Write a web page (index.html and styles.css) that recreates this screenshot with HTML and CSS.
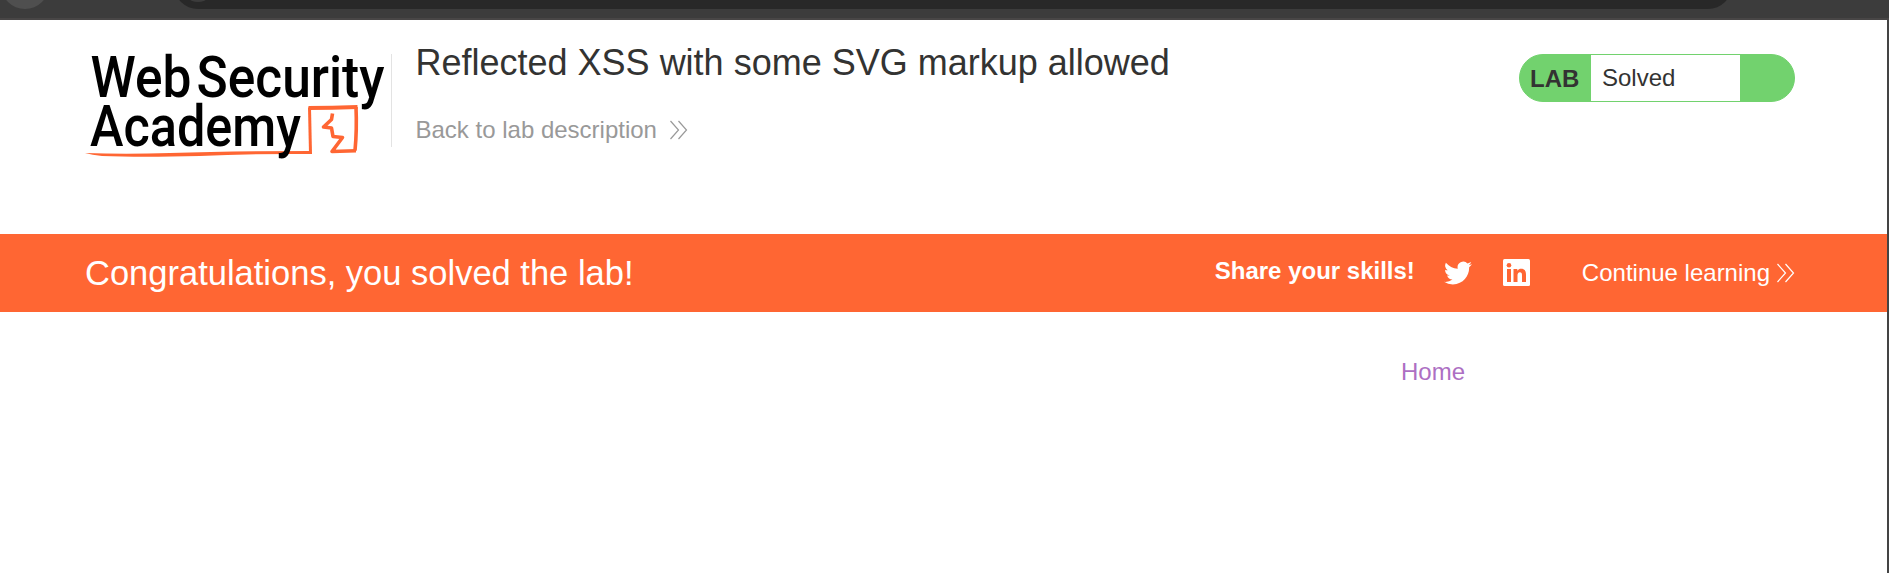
FILE: index.html
```html
<!DOCTYPE html>
<html lang="en">
<head>
<meta charset="utf-8">
<title>Reflected XSS with some SVG markup allowed</title>
<link rel="stylesheet" href="styles.css">
</head>
<body>
<svg class="chrome" viewBox="0 0 1889 20">
  <rect width="1889" height="20" fill="#3c3c3c"/>
  <circle cx="25" cy="-15" r="24" fill="#4f4f4f"/>
  <rect x="174" y="-39" width="1558" height="48" rx="24" fill="#282828"/>
  <circle cx="198" cy="-15" r="17" fill="#3c3c3c"/>
  <rect y="18" width="1889" height="2" fill="#484646"/>
</svg>
<div class="page">
  <header class="header">
    <svg class="logo" viewBox="0 0 310 130">
      <g fill="none" stroke="#ff6633" stroke-linejoin="round">
        <path d="M240.500 114L239.500 67.500" stroke-width="3"/>
        <path d="M238.500 68Q262 67.800 287.500 67" stroke-width="4"/>
        <path d="M286 67Q287 90 285 110.700" stroke-width="3.600"/>
        <path d="M286 110.700L262 111.500L272.500 97.500L263 96.500L261.500 88L253.500 87L261.500 79.500L262.500 73.500" stroke-width="3.600"/>
      </g>
      <path d="M15 113Q55 114.500 100 113Q160 111 241 111V114Q180 113.500 130 116Q70 117.500 32 116Q22 115 15 113Z" fill="#ff6633"/>
      <g class="wordmark">
        <text x="20.500" y="57" textLength="101" lengthAdjust="spacingAndGlyphs">Web</text>
        <text x="126.500" y="57" textLength="188" lengthAdjust="spacingAndGlyphs">Security</text>
        <text x="20" y="106" textLength="211" lengthAdjust="spacingAndGlyphs">Academy</text>
      </g>
    </svg>
    <div class="heading">
      <h2>Reflected XSS with some SVG markup allowed</h2>
      <a class="back">Back to lab description
        <svg class="arrows" viewBox="0 0 18 20"><path d="M.5 1L8.500 10L.5 19M8.500 1L16.500 10L8.500 19"/></svg>
      </a>
    </div>
    <div class="status"><b>LAB</b><span>Solved</span></div>
  </header>
  <section class="banner">
    <h4>Congratulations, you solved the lab!</h4>
    <div class="share">
      <b>Share your skills!</b>
      <svg class="twitter" viewBox="0 0 24 24"><path d="M23.950 4.570a10 10 0 0 1-2.820.77 4.960 4.960 0 0 0 2.160-2.720c-.95.560-2 .960-3.130 1.180a4.920 4.920 0 0 0-8.380 4.480C7.690 8.090 4.070 6.130 1.640 3.160a4.930 4.930 0 0 0 1.520 6.570 4.900 4.900 0 0 1-2.230-.61v.06a4.920 4.920 0 0 0 3.950 4.830 5 5 0 0 1-2.220.08 4.930 4.930 0 0 0 4.600 3.420A9.870 9.870 0 0 1 0 19.540a13.990 13.990 0 0 0 7.550 2.210c9.050 0 14-7.500 14-13.990v-.64a9.900 9.900 0 0 0 2.400-2.550z"/></svg>
      <svg class="linkedin" viewBox="0 0 27 27"><rect width="27" height="27" rx="1.500"/><path fill="#ff6633" d="M4 10h4v13H4zM10.500 10h3.800v1.800c1-1.500 2.200-2.100 3.900-2.100 3.500 0 4.800 2.300 4.800 6V23h-4v-6.600c0-2-.5-3.200-2.100-3.200-1.700 0-2.400 1.300-2.400 3.200V23h-4z"/><circle cx="6" cy="6.200" r="2.300" fill="#ff6633"/></svg>
      <a class="continue">Continue learning
        <svg class="arrows" viewBox="0 0 18 20"><path d="M.5 1L8.500 10L.5 19M8.500 1L16.500 10L8.500 19"/></svg>
      </a>
    </div>
  </section>
  <nav class="nav"><a>Home</a></nav>
</div>
</body>
</html>
```

FILE: styles.css
```css
* { box-sizing: border-box; }
body { margin: 0; background: #fff; color: #333332; font: 24px/28px "Liberation Sans", Arial, sans-serif; overflow: hidden; }
.chrome { display: block; width: 1889px; height: 20px; }
.page { height: 553px; border-right: 2px solid #444; }
.header { display: flex; align-items: flex-start; height: 214px; padding: 20px 92px 0 70px; }
.logo { width: 310px; height: 130px; flex: none; overflow: visible; }
.wordmark { font-family: Roboto, sans-serif; font-weight: 500; font-size: 57px; fill: #000; }
.heading { margin: 14px 0 0 11px; height: 93px; padding-left: 23.5px; border-left: 1px solid #e3e3e3; white-space: nowrap; }
h2 { margin: -13px 0 0; font-weight: 400; font-size: 36px; line-height: 44px; }
.back { display: flex; align-items: center; gap: 13px; margin-top: 31px; color: #999; }
.arrows { width: 18px; height: 20px; fill: none; stroke: currentColor; stroke-width: 1.2; }
.status { display: flex; width: 276px; height: 48px; margin: 14px 0 0 auto; border: 1px solid #72d26e; border-radius: 24px; background: #72d26e; line-height: 46px; }
.status b { width: 71px; padding-left: 10px; line-height: 48px; }
.status span { width: 149px; padding-left: 11px; background: #fff; }
.banner { display: flex; align-items: center; justify-content: space-between; height: 78px; padding: 0 92px 0 85px; background: #ff6633; color: #fff; white-space: nowrap; }
h4 { margin: 0; font-weight: 400; font-size: 34.5px; line-height: 44px; }
.share { display: flex; align-items: center; }
.share > b { margin-top: -4px; }
.twitter { width: 28px; height: 28px; margin: 0 0 0 29px; fill: #fff; }
.linkedin { width: 27px; height: 27px; margin: -1px 0 0 31px; fill: #fff; }
.continue { display: flex; align-items: center; gap: 7px; margin-left: 52px; }
.nav { padding: 46px 0 0 1401px; color: #ad6fc3; }
```
